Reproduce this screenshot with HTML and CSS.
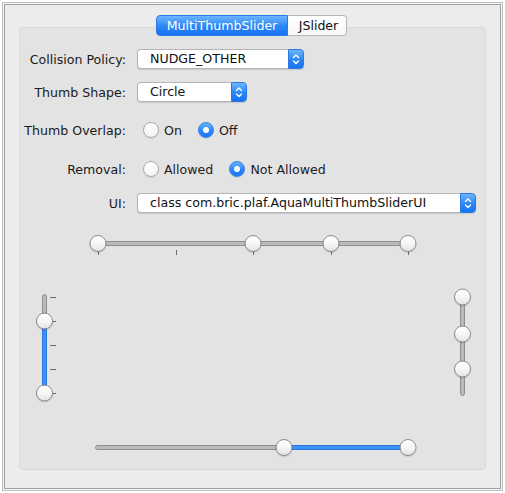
FILE: index.html
```html
<!DOCTYPE html>
<html>
<head>
<meta charset="utf-8">
<link rel="stylesheet" href="styles.css">
</head>
<body>
<div class="window">
  <div class="frame">
    <div class="tabs">
      <div class="tab tab-active">MultiThumbSlider</div>
      <div class="tab tab-plain">JSlider</div>
    </div>
    <div class="panel">
      <div class="form">
        <div class="row row-1">
          <span class="label">Collision Policy:</span>
          <div class="combo combo-collision">
            <span class="combo-text">NUDGE_OTHER</span>
            <span class="combo-btn"><svg width="14" height="18" viewBox="0 0 14 18"><path d="M4.5 7.5 L7 5 L9.5 7.5 M4.5 11 L7 13.5 L9.5 11" fill="none" stroke="#fff" stroke-width="1.4" stroke-linecap="round" stroke-linejoin="round"/></svg></span>
          </div>
        </div>
        <div class="row row-2">
          <span class="label">Thumb Shape:</span>
          <div class="combo combo-shape">
            <span class="combo-text">Circle</span>
            <span class="combo-btn"><svg width="14" height="18" viewBox="0 0 14 18"><path d="M4.5 7.5 L7 5 L9.5 7.5 M4.5 11 L7 13.5 L9.5 11" fill="none" stroke="#fff" stroke-width="1.4" stroke-linecap="round" stroke-linejoin="round"/></svg></span>
          </div>
        </div>
        <div class="row row-3">
          <span class="label">Thumb Overlap:</span>
          <div class="radios">
            <span class="radio"><span class="radio-dot"></span><span class="radio-text">On</span></span>
            <span class="radio radio-on"><span class="radio-dot"></span><span class="radio-text">Off</span></span>
          </div>
        </div>
        <div class="row row-4">
          <span class="label">Removal:</span>
          <div class="radios">
            <span class="radio"><span class="radio-dot"></span><span class="radio-text">Allowed</span></span>
            <span class="radio radio-on"><span class="radio-dot"></span><span class="radio-text">Not Allowed</span></span>
          </div>
        </div>
        <div class="row row-5">
          <span class="label">UI:</span>
          <div class="combo combo-ui">
            <span class="combo-text">class com.bric.plaf.AquaMultiThumbSliderUI</span>
            <span class="combo-btn"><svg width="14" height="18" viewBox="0 0 14 18"><path d="M4.5 7.5 L7 5 L9.5 7.5 M4.5 11 L7 13.5 L9.5 11" fill="none" stroke="#fff" stroke-width="1.4" stroke-linecap="round" stroke-linejoin="round"/></svg></span>
          </div>
        </div>
      </div>

      <div class="hslider hslider-top">
        <div class="h-track"></div>
        <div class="h-range">
          <span class="tick-h" style="left:0%"></span>
          <span class="tick-h" style="left:25%"></span>
          <span class="tick-h" style="left:50%"></span>
          <span class="tick-h" style="left:75%"></span>
          <span class="tick-h" style="left:100%"></span>
          <span class="thumb" style="left:0%"></span>
          <span class="thumb" style="left:50%"></span>
          <span class="thumb" style="left:75%"></span>
          <span class="thumb" style="left:100%"></span>
        </div>
      </div>

      <div class="middle">
        <div class="vslider">
          <div class="v-track"></div>
          <div class="v-range">
            <span class="tick-v" style="top:0%"></span>
            <span class="tick-v" style="top:25%"></span>
            <span class="tick-v" style="top:50%"></span>
            <span class="tick-v" style="top:75%"></span>
            <span class="tick-v" style="top:100%"></span>
            <span class="v-fill" style="top:25%;height:75%"></span>
            <span class="thumb" style="top:25%"></span>
            <span class="thumb" style="top:100%"></span>
          </div>
        </div>
        <div class="vslider">
          <div class="v-track"></div>
          <div class="v-range">
            <span class="thumb" style="top:0%"></span>
            <span class="thumb" style="top:38.5%"></span>
            <span class="thumb" style="top:75%"></span>
          </div>
        </div>
      </div>

      <div class="hslider hslider-bottom">
        <div class="h-track"></div>
        <div class="h-range">
          <span class="h-fill" style="left:60%;width:40%"></span>
          <span class="thumb" style="left:60%"></span>
          <span class="thumb" style="left:100%"></span>
        </div>
      </div>
    </div>
  </div>
</div>
</body>
</html>
```

FILE: styles.css
```css
* { box-sizing: border-box; }
html, body { margin: 0; padding: 0; }
body {
  background: #ffffff;
  font-family: "DejaVu Sans", "Liberation Sans", sans-serif;
  font-size: 12.6px;
  color: #1d1d1d;
  width: 505px;
  height: 493px;
  overflow: hidden;
}
.window {
  margin: 2px 0 0 2px;
  width: 501px;
  height: 489px;
  border: 1px solid #bdbdbd;
  padding: 1px;
  background: #f7f7f7;
}
.frame {
  height: 100%;
  border: 1px solid #9f9f9f;
  background: #ececec;
  padding: 10px 0 0 14px;
}
.tabs {
  display: flex;
  height: 21px;
  padding-left: 137px;
  position: relative;
  z-index: 1;
}
.tab {
  height: 21px;
  line-height: 19px;
  text-align: center;
  white-space: nowrap;
}
.tab-active {
  width: 132px;
  background: linear-gradient(#6cb5fc, #2a86f7 55%, #1774f3);
  border: 1px solid #2b7be6;
  border-radius: 4px 0 0 4px;
  color: #ffffff;
}
.tab-plain {
  width: 59px;
  padding-left: 3px;
  background: linear-gradient(#ffffff, #f7f7f7);
  border: 1px solid #b6b6b6;
  border-left: none;
  border-radius: 0 4px 4px 0;
  color: #111111;
}
.panel {
  width: 467px;
  height: 443px;
  margin-top: -9px;
  background: #e3e3e3;
  border: 1px solid #d9d9d9;
  border-radius: 4px;
}
.form { padding-top: 21px; }
.row {
  display: grid;
  grid-template-columns: 106px auto;
  column-gap: 11px;
  align-items: center;
  justify-items: start;
  height: 20px;
}
.row-2 { margin-top: 13px; }
.row-3 { margin-top: 18px; }
.row-4 { margin-top: 19px; }
.row-5 { margin-top: 14px; }
.label {
  justify-self: end;
  white-space: nowrap;
  color: #1a1a1a;
}
.combo {
  display: flex;
  height: 20px;
  border-radius: 4px;
  box-shadow: 0 1px 1px rgba(0, 0, 0, 0.12);
}
.combo-collision { width: 167px; }
.combo-shape { width: 110px; }
.combo-ui { width: 339px; }
.combo-text {
  flex: 1;
  height: 20px;
  line-height: 18px;
  padding-left: 12px;
  background: #ffffff;
  border: 1px solid #b5b5b5;
  border-right: none;
  border-radius: 4px 0 0 4px;
  white-space: nowrap;
  color: #111111;
}
.combo-btn {
  width: 16px;
  height: 20px;
  background: linear-gradient(#6db5fc, #2b87f7 55%, #1673f2);
  border: 1px solid #2a79e4;
  border-radius: 0 4px 4px 0;
  display: flex;
  align-items: center;
  justify-content: center;
}
.radios {
  display: flex;
  align-items: center;
  gap: 16px;
  padding-left: 6px;
}
.radio {
  display: flex;
  align-items: center;
  gap: 5px;
  white-space: nowrap;
}
.radio-dot {
  width: 16px;
  height: 16px;
  border-radius: 50%;
  border: 1px solid #a9a9a9;
  background: linear-gradient(#ffffff, #f3f3f3);
  box-shadow: 0 1px 1px rgba(0, 0, 0, 0.08);
  display: flex;
  align-items: center;
  justify-content: center;
}
.radio-on .radio-dot {
  border-color: #3682ea;
  background: linear-gradient(#68b3fc, #2a86f7 55%, #1a76f3);
}
.radio-on .radio-dot::after {
  content: "";
  width: 6px;
  height: 6px;
  border-radius: 50%;
  background: #ffffff;
}

.hslider {
  position: relative;
  width: 316px;
  height: 17px;
  margin-left: 75px;
}
.hslider-top { margin-top: 22px; }
.hslider-bottom { margin-top: 43px; }
.h-track {
  position: absolute;
  left: 0;
  right: 0;
  top: 6px;
  height: 5px;
  background: #bababa;
  border: 1px solid #8f8f8f;
  border-radius: 3px;
}
.h-range {
  position: absolute;
  left: 3px;
  right: 3px;
  top: 0;
  bottom: 0;
}
.h-fill {
  position: absolute;
  top: 6px;
  height: 5px;
  background: #3c90f6;
  border-top: 1px solid #2a78e0;
  border-bottom: 1px solid #2a78e0;
}
.tick-h {
  position: absolute;
  top: 15px;
  width: 1px;
  height: 5px;
  background: #6b6b6b;
}
.thumb {
  position: absolute;
  width: 17px;
  height: 17px;
  border-radius: 50%;
  border: 1px solid #8c8c8c;
  background: linear-gradient(#ffffff, #f6f6f6 50%, #e3e3e3);
  box-shadow: 0 1px 1px rgba(0, 0, 0, 0.15);
}
.h-range .thumb {
  top: 0;
  transform: translateX(-50%);
}

.middle {
  display: flex;
  justify-content: space-between;
  margin-top: 42px;
  padding: 0 14px 0 16px;
  height: 102px;
}
.vslider {
  position: relative;
  width: 17px;
  height: 102px;
}
.v-track {
  position: absolute;
  top: 0;
  bottom: 0;
  left: 6px;
  width: 5px;
  background: #bababa;
  border: 1px solid #8f8f8f;
  border-radius: 3px;
}
.v-range {
  position: absolute;
  top: 3px;
  bottom: 3px;
  left: 0;
  right: 0;
}
.v-fill {
  position: absolute;
  left: 6px;
  width: 5px;
  background: #3c90f6;
  border-left: 1px solid #2a78e0;
  border-right: 1px solid #2a78e0;
}
.tick-v {
  position: absolute;
  left: 14px;
  width: 6px;
  height: 1px;
  background: #6b6b6b;
}
.v-range .thumb {
  left: 0;
  transform: translateY(-50%);
}
```
